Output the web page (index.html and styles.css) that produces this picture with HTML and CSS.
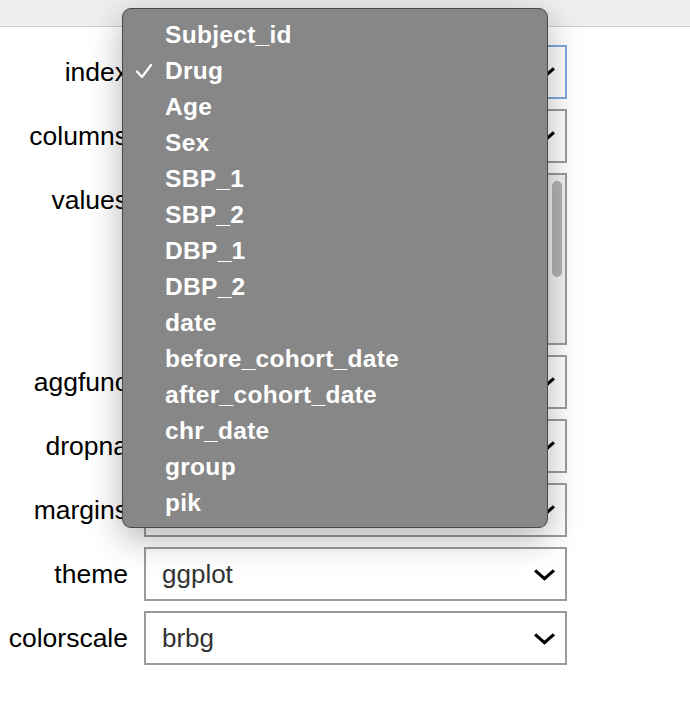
FILE: index.html
```html
<!DOCTYPE html>
<html>
<head>
<meta charset="utf-8">
<link rel="stylesheet" href="styles.css">
</head>
<body>
<div class="topbar"></div>
<div class="form">
  <div class="label">index</div>
  <div class="select focus"><span class="val"></span><svg class="chev" viewBox="0 0 22 12"><path d="M2 2 L11 10 L20 2"/></svg></div>
  <div class="label">columns</div>
  <div class="select"><span class="val"></span><svg class="chev" viewBox="0 0 22 12"><path d="M2 2 L11 10 L20 2"/></svg></div>
  <div class="label">values</div>
  <div class="listbox"><div class="track"><div class="thumb"></div></div></div>
  <div class="label">aggfunc</div>
  <div class="select"><span class="val"></span><svg class="chev" viewBox="0 0 22 12"><path d="M2 2 L11 10 L20 2"/></svg></div>
  <div class="label">dropna</div>
  <div class="select"><span class="val"></span><svg class="chev" viewBox="0 0 22 12"><path d="M2 2 L11 10 L20 2"/></svg></div>
  <div class="label">margins</div>
  <div class="select"><span class="val"></span><svg class="chev" viewBox="0 0 22 12"><path d="M2 2 L11 10 L20 2"/></svg></div>
  <div class="label">theme</div>
  <div class="select"><span class="val">ggplot</span><svg class="chev" viewBox="0 0 22 12"><path d="M2 2 L11 10 L20 2"/></svg></div>
  <div class="label">colorscale</div>
  <div class="select"><span class="val">brbg</span><svg class="chev" viewBox="0 0 22 12"><path d="M2 2 L11 10 L20 2"/></svg></div>
</div>
<div class="menu">
  <div class="item">Subject_id</div>
  <div class="item checked"><svg class="check" viewBox="0 0 18 16"><path d="M2 8.5 L7 14 L16 2"/></svg>Drug</div>
  <div class="item">Age</div>
  <div class="item">Sex</div>
  <div class="item">SBP_1</div>
  <div class="item">SBP_2</div>
  <div class="item">DBP_1</div>
  <div class="item">DBP_2</div>
  <div class="item">date</div>
  <div class="item">before_cohort_date</div>
  <div class="item">after_cohort_date</div>
  <div class="item">chr_date</div>
  <div class="item">group</div>
  <div class="item">pik</div>
</div>
</body>
</html>
```
FILE: styles.css
```css
html, body {
  margin: 0;
  padding: 0;
  background: #fff;
  font-family: "Liberation Sans", Arial, sans-serif;
}
.topbar {
  height: 26px;
  background: #efefef;
  border-bottom: 1px solid #cdcdcd;
}
.form {
  display: grid;
  grid-template-columns: 120px 423px;
  column-gap: 16px;
  row-gap: 10px;
  padding: 18px 0 0 8px;
}
.label {
  font-size: 26.5px;
  line-height: 54px;
  text-align: right;
  color: #000;
}
.select {
  box-sizing: border-box;
  height: 54px;
  border: 2px solid #9b9b9b;
  background: #fff;
  display: flex;
  align-items: center;
  justify-content: space-between;
  padding: 0 9px 0 16px;
}
.select.focus {
  border-color: #7ba9dd;
}
.val {
  font-size: 26px;
  color: #333;
}
.chev {
  width: 23px;
  height: 13px;
  fill: none;
  stroke: #000;
  stroke-width: 3;
}
.listbox {
  box-sizing: border-box;
  height: 172px;
  border: 2px solid #9b9b9b;
  background: #fff;
  display: flex;
  justify-content: flex-end;
}
.track {
  width: 17px;
  background: #f2f2f2;
  border-left: 1px solid #e2e2e2;
  padding: 6px 3px 0 3px;
  box-sizing: border-box;
}
.thumb {
  height: 96px;
  border-radius: 6px;
  background: #b3b3b3;
}
.menu {
  position: absolute;
  left: 122px;
  top: 8px;
  width: 426px;
  height: 520px;
  box-sizing: border-box;
  padding: 8px 0;
  background: #878787;
  border: 1px solid #4a4a4a;
  border-radius: 9px;
  box-shadow: 0 10px 34px rgba(0,0,0,0.3);
}
.item {
  position: relative;
  height: 36px;
  line-height: 35px;
  padding-left: 42px;
  color: #fff;
  font-size: 24.5px;
  font-weight: bold;
  letter-spacing: 0.3px;
}
.check {
  position: absolute;
  left: 12px;
  top: 10px;
  width: 18px;
  height: 16px;
  fill: none;
  stroke: #fff;
  stroke-width: 2.2;
  stroke-linecap: round;
  stroke-linejoin: round;
}
```
